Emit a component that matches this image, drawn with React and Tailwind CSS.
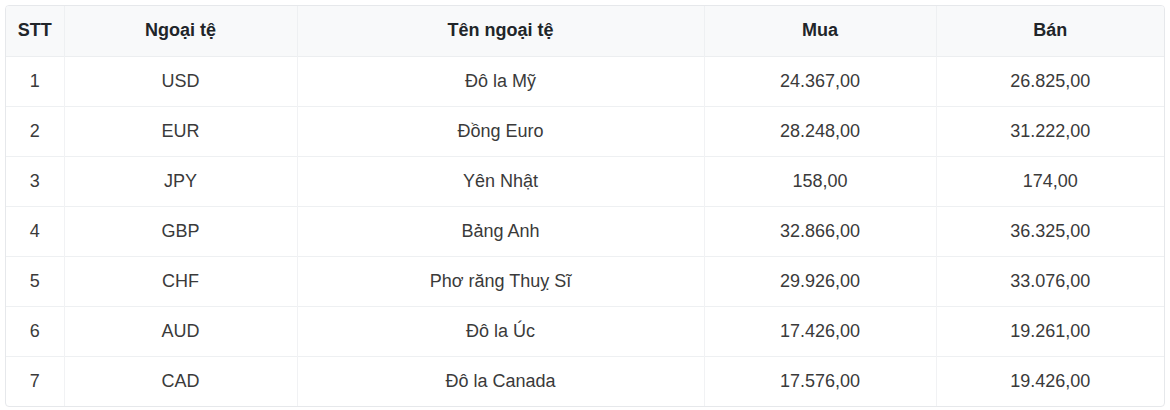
const rows = [
  ['1', 'USD', 'Đô la Mỹ', '24.367,00', '26.825,00'],
  ['2', 'EUR', 'Đồng Euro', '28.248,00', '31.222,00'],
  ['3', 'JPY', 'Yên Nhật', '158,00', '174,00'],
  ['4', 'GBP', 'Bảng Anh', '32.866,00', '36.325,00'],
  ['5', 'CHF', 'Phơ răng Thuỵ Sĩ', '29.926,00', '33.076,00'],
  ['6', 'AUD', 'Đô la Úc', '17.426,00', '19.261,00'],
  ['7', 'CAD', 'Đô la Canada', '17.576,00', '19.426,00'],
];

export default function App() {
  return (
    <div className="w-[1170px] h-[410px] bg-white p-[5px] font-['Liberation_Sans',Arial,sans-serif]">
      <div className="border border-[#e6e8eb] rounded-[4px] overflow-hidden">
        <table className="w-full table-fixed border-collapse text-[18px]">
          <colgroup>
            <col className="w-[58px]" />
            <col className="w-[233px]" />
            <col className="w-[407px]" />
            <col className="w-[232px]" />
            <col />
          </colgroup>
          <thead>
            <tr className="h-[50px] bg-[#f8f9fa] border-b border-[#eceef0]">
              <th className="font-bold text-[#212529] text-center border-r border-[#eef0f2]">STT</th>
              <th className="font-bold text-[#212529] text-center border-r border-[#eef0f2]">Ngoại tệ</th>
              <th className="font-bold text-[#212529] text-center border-r border-[#eef0f2]">Tên ngoại tệ</th>
              <th className="font-bold text-[#212529] text-center border-r border-[#eef0f2]">Mua</th>
              <th className="font-bold text-[#212529] text-center">Bán</th>
            </tr>
          </thead>
          <tbody>
            {rows.map((r, i) => (
              <tr key={i} className={`h-[50px] ${i < rows.length - 1 ? 'border-b border-[#eef0f2]' : ''}`}>
                {r.map((c, j) => (
                  <td
                    key={j}
                    className={`text-center text-[#3a3a3a] ${j < 4 ? 'border-r border-[#f1f2f4]' : ''}`}
                  >
                    {c}
                  </td>
                ))}
              </tr>
            ))}
          </tbody>
        </table>
      </div>
    </div>
  );
}
